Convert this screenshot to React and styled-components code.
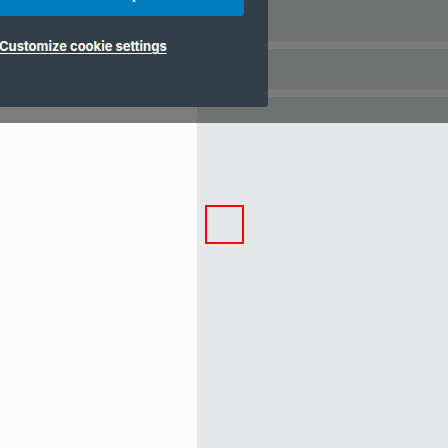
import React from 'react';
import styled, { createGlobalStyle } from 'styled-components';

const GlobalStyle = createGlobalStyle`
  html, body {
    margin: 0;
    padding: 0;
    overflow: hidden;
  }
  body {
    font-family: Inter, "Liberation Sans", sans-serif;
  }
`;

export default function App() {
  return (
    <>
      <GlobalStyle />
      <Page>
        <Sidebar />
        <Main>
          <Stripe />
          <Stripe />
          <Checkbox aria-label='placeholder' />
        </Main>
      </Page>
      <Overlay />
      <CookiePanel>
        <AcceptButton>Accept</AcceptButton>
        <SettingsLink href='#'>Customize cookie settings</SettingsLink>
      </CookiePanel>
    </>
  );
}

const Page = styled.div`
  display: grid;
  grid-template-columns: 197px 1fr;
  height: 100vh;
`;

const Sidebar = styled.div`
  background: #fafafa;
`;

const Main = styled.div`
  background: #e4e6e7;
  padding-top: 41px;
  display: flex;
  flex-direction: column;
  gap: 40px;
`;

const Stripe = styled.div`
  height: 8px;
  background: #f8f8f8;
`;

const Checkbox = styled.div`
  width: 35px;
  height: 35px;
  margin: 68px 0 0 8px;
  border: 2px solid #ff0000;
`;

const Overlay = styled.div`
  position: fixed;
  top: 0;
  left: 0;
  right: 0;
  height: 123px;
  background: rgba(0, 0, 0, 0.505);
`;

const CookiePanel = styled.div`
  position: fixed;
  top: -28px;
  left: -25px;
  width: 245px;
  padding: 0 24px 53px;
  background: #333f48;
  border-bottom-right-radius: 3px;
  display: flex;
  flex-direction: column;
  align-items: flex-start;
`;

const AcceptButton = styled.button`
  width: 100%;
  height: 44px;
  border: 0;
  border-radius: 0 0 3px 0;
  background: #007bc0;
  color: #ffffff;
  font-family: inherit;
  font-size: 14px;
  font-weight: 700;
  line-height: 1;
`;

const SettingsLink = styled.a`
  margin-top: 22px;
  color: #ffffff;
  font-size: 13px;
  font-weight: 700;
  line-height: 16px;
  text-decoration: underline;
  text-underline-offset: 2px;
`;
